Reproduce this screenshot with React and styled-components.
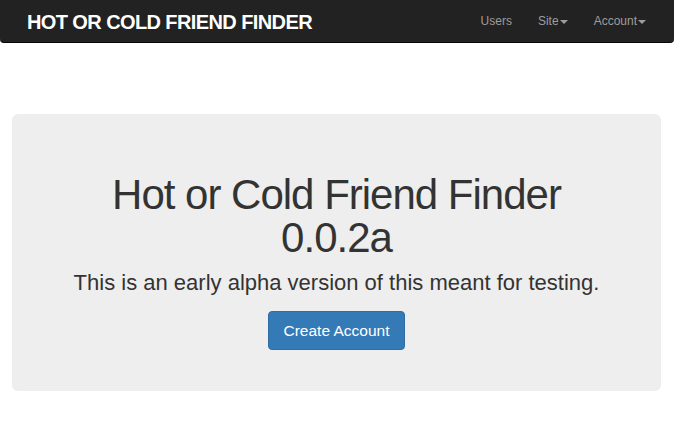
import React from "react";
import styled, { createGlobalStyle } from "styled-components";

const GlobalStyle = createGlobalStyle`
  body {
    margin: 0;
    background: #fff;
    font-family: "Liberation Sans", Arial, sans-serif;
    color: #333;
  }
`;

const Navbar = styled.nav`
  height: 43px;
  background-color: #222;
  border-bottom: 1px solid #080808;
  box-sizing: border-box;
  border-radius: 0 0 4px 4px;
  display: flex;
  align-items: center;
  justify-content: space-between;
  padding: 0 15px 0 27px;
`;

const Brand = styled.a`
  color: #fff;
  font-size: 20px;
  font-weight: 700;
  letter-spacing: -0.6px;
  text-decoration: none;
  line-height: 20px;
  margin-top: 1px;
`;

const NavList = styled.ul`
  display: flex;
  list-style: none;
  margin: 0;
  padding: 0;
`;

const NavItem = styled.li`
  display: flex;
  align-items: center;
  padding: 0 13px;
  color: #9d9d9d;
  font-size: 12px;
  line-height: 20px;
  cursor: pointer;
`;

const Caret = styled.span`
  display: inline-block;
  width: 0;
  height: 0;
  margin-left: 1px;
  margin-top: 2px;
  border-top: 4px solid #9d9d9d;
  border-left: 4px solid transparent;
  border-right: 4px solid transparent;
`;

const Container = styled.main`
  padding: 71px 13px 0 12px;
`;

const Jumbotron = styled.section`
  background-color: #eee;
  border-radius: 6px;
  padding: 59px 20px 41px;
  text-align: center;
`;

const Title = styled.h1`
  margin: 0;
  font-size: 42px;
  font-weight: 400;
  letter-spacing: -1px;
  line-height: 43px;
  color: #333;
`;

const Lead = styled.p`
  margin: 9px 0 14px;
  font-size: 22px;
  line-height: 29px;
  font-weight: 400;
`;

const Button = styled.a`
  display: inline-block;
  box-sizing: border-box;
  height: 39px;
  padding: 0 15px;
  line-height: 37px;
  font-size: 15.5px;
  color: #fff;
  background-color: #337ab7;
  border: 1px solid #2e6da4;
  border-radius: 4px;
  text-decoration: none;
  cursor: pointer;
`;

const navLinks = [
  { label: "Users" },
  { label: "Site", dropdown: true },
  { label: "Account", dropdown: true }
];

const App = () => (
  <>
    <GlobalStyle />
    <Navbar>
      <Brand href="#">HOT OR COLD FRIEND FINDER</Brand>
      <NavList>
        {navLinks.map(link => (
          <NavItem key={link.label}>
            {link.label}
            {link.dropdown && <Caret />}
          </NavItem>
        ))}
      </NavList>
    </Navbar>
    <Container>
      <Jumbotron>
        <Title>
          Hot or Cold Friend Finder
          <br />
          0.0.2a
        </Title>
        <Lead>This is an early alpha version of this meant for testing.</Lead>
        <Button href="#">Create Account</Button>
      </Jumbotron>
    </Container>
  </>
);

export default App;
